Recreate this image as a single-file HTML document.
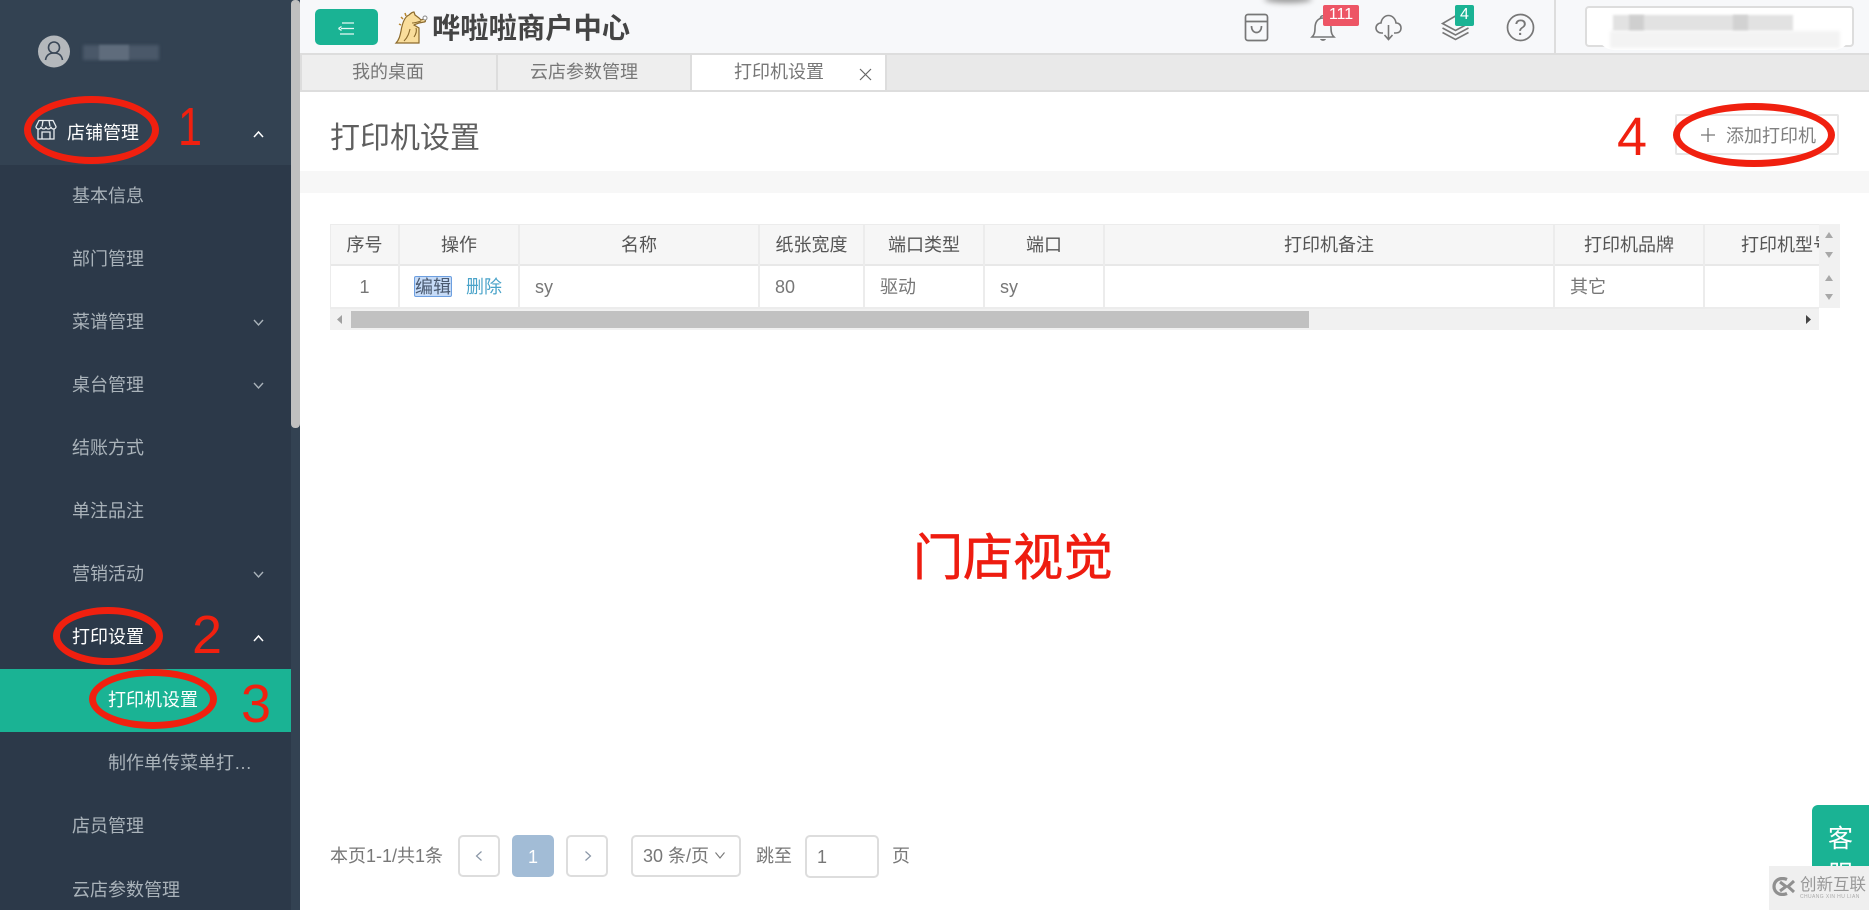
<!DOCTYPE html>
<html lang="zh"><head><meta charset="utf-8"><title>打印机设置</title>
<style>
html,body{margin:0;padding:0;width:1869px;height:910px;overflow:hidden;background:#fff}
body{position:relative;font-family:"Liberation Sans","Noto Sans CJK SC",sans-serif;font-size:18px;color:#666}
div,span,svg{position:absolute;box-sizing:border-box}
.t{white-space:nowrap;line-height:30px;height:30px}
.m{color:#aab3ba;left:72px}
.th{color:#555;text-align:center;top:230px}
.td{color:#777;top:272px}
.sep{top:224px;width:2px;height:84px;background:#ececec}
.r{font-family:"Liberation Sans",sans-serif;color:#f0200f;line-height:1;white-space:nowrap}
.el{border:7px solid #f0200f;border-radius:50%}
.pg{border:2px solid #ddd;border-radius:5px;top:835px;height:42px;background:#fff}
</style></head><body>

<!-- sidebar -->
<div style="left:0;top:0;width:300px;height:910px;background:#334252"></div>
<div style="left:0;top:165px;width:291px;height:745px;background:#2c3949"></div>
<div style="left:291px;top:0;width:9px;height:428px;background:#c0c0c0;border-radius:4px"></div>

<svg style="left:38px;top:35px" width="32" height="33" viewBox="0 0 32 33"><circle cx="16" cy="16.500" r="16" fill="#b4b8bc"/><circle cx="16" cy="12.500" r="5.500" fill="none" stroke="#3a4757" stroke-width="1.600"/><path d="M7.500 25c.8-5 4-7 8.500-7s7.700 2 8.500 7" fill="none" stroke="#3a4757" stroke-width="1.600"/></svg>
<div style="left:83px;top:45px;width:76px;height:15px;background:#4a5869;filter:blur(1.500px)"></div>
<div style="left:99px;top:45px;width:30px;height:15px;background:#5f6c7c;filter:blur(1px)"></div>

<svg style="left:35px;top:119px" width="22" height="21" viewBox="0 0 22 21" fill="none" stroke="#e8ecef" stroke-width="1.300"><path d="M4 1.500h14l3 6c0 1.500-1.200 2.500-2.500 2.500S16 9 16 7.800C16 9 14.500 10 13.300 10S11 9 11 7.800C11 9 10 10 8.700 10S6 9 6 7.800C6 9 5 10 3.500 10S1 9 1 7.500z"/><path d="M3 10v10h16V10M7 20v-7h8v7M7 7.500l1-6M15 7.500l-1-6"/></svg>
<div class="t" style="left:67px;top:118px;color:#fff">店铺管理</div>
<svg style="left:253px;top:130px" width="11" height="9" viewBox="0 0 11 9" fill="none" stroke="#fff" stroke-width="1.500"><path d="M1 7l4.500-5L10 7"/></svg>

<div class="t m" style="top:181px">基本信息</div>
<div class="t m" style="top:244px">部门管理</div>
<div class="t m" style="top:307px">菜谱管理</div>
<svg style="left:253px;top:318px" width="11" height="9" viewBox="0 0 11 9" fill="none" stroke="#aab3ba" stroke-width="1.400"><path d="M1 2l4.500 5L10 2"/></svg>
<div class="t m" style="top:370px">桌台管理</div>
<svg style="left:253px;top:381px" width="11" height="9" viewBox="0 0 11 9" fill="none" stroke="#aab3ba" stroke-width="1.400"><path d="M1 2l4.500 5L10 2"/></svg>
<div class="t m" style="top:433px">结账方式</div>
<div class="t m" style="top:496px">单注品注</div>
<div class="t m" style="top:559px">营销活动</div>
<svg style="left:253px;top:570px" width="11" height="9" viewBox="0 0 11 9" fill="none" stroke="#aab3ba" stroke-width="1.400"><path d="M1 2l4.500 5L10 2"/></svg>
<div class="t m" style="top:622px;color:#fff">打印设置</div>
<svg style="left:253px;top:634px" width="11" height="9" viewBox="0 0 11 9" fill="none" stroke="#fff" stroke-width="1.500"><path d="M1 7l4.500-5L10 7"/></svg>
<div style="left:0;top:669px;width:291px;height:63px;background:#1ab394"></div>
<div class="t" style="left:108px;top:685px;color:#fff">打印机设置</div>
<div class="t m" style="left:108px;top:748px">制作单传菜单打…</div>
<div class="t m" style="top:811px">店员管理</div>
<div class="t m" style="top:875px">云店参数管理</div>

<!-- header -->
<div style="left:300px;top:0;width:1569px;height:53px;background:#f7f8fa"></div>
<div style="left:300px;top:53px;width:1569px;height:2px;background:#ddd"></div>
<div style="left:315px;top:9px;width:63px;height:36px;background:#1ab394;border-radius:5px"></div>
<svg style="left:337px;top:21px" width="21" height="15" viewBox="0 0 21 15" fill="none" stroke="#e8f8f4" stroke-width="1.300"><path d="M5 2h12M4 7.500h13M1.500 7.500l3-2M1.500 7.500l3 2M3 13h14"/></svg>

<svg style="left:394px;top:11px" width="34" height="33" viewBox="0 0 34 33"><path d="M2 32c3-3 4-7 5-12 1-6 3-14 8-16 2-2 4-3 5-3l1 3 4 3 2 2 3-1c2 0 2 3 0 3l-5 1c-2 1-4 1-5 2l5 3v15H2z" fill="#f9dd9b" stroke="#8b6a2c" stroke-width="1.200"/><path d="M18 12c3 0 6-1 9-2M16 18c-1 4-2 8-6 12M22 17c1 3 0 6-2 9" fill="none" stroke="#8b6a2c" stroke-width="1.100"/><path d="M7 14l-2-1M9 8L7 6M12 5l-1-3" stroke="#b8862f" stroke-width="1.500"/><circle cx="31" cy="7" r="2" fill="#fff" stroke="#888"/></svg>
<div style="left:432px;top:9px;line-height:38px;font-size:28.300px;font-weight:bold;color:#444;white-space:nowrap">哗啦啦商户中心</div>

<div style="left:1264px;top:-5px;width:48px;height:8px;background:#999;border-radius:50%;filter:blur(3px)"></div>

<svg style="left:1244px;top:13px" width="25" height="29" viewBox="0 0 25 29" fill="none" stroke="#777" stroke-width="1.700"><rect x="1.500" y="1.500" width="22" height="26" rx="2.500"/><path d="M1.500 8.500h22M7.500 13c0 4 2 6.500 5 6.500s5-2.500 5-6.500"/></svg>
<svg style="left:1310px;top:14px" width="26" height="28" viewBox="0 0 26 28" fill="none" stroke="#777" stroke-width="1.600"><path d="M2 23c2-2 3-4 3-9 0-6 3-10 8-10s8 4 8 10c0 5 1 7 3 9zM10.500 4c0-3 5-3 5 0"/><path d="M10 25c1 2.500 5 2.500 6 0z" fill="#777" stroke="none"/></svg>
<div style="left:1323px;top:5px;width:36px;height:21px;background:#ed5565;border-radius:2px;color:#fff;font-size:16px;line-height:20px;text-align:center">111</div>
<svg style="left:1375px;top:14px" width="27" height="27" viewBox="0 0 27 27" fill="none" stroke="#777" stroke-width="1.600"><path d="M8 19H6.500C3 19 1 16.500 1 14c0-3 2.500-5 5-5 .5-4 3.500-7.500 7.500-7.500S20.500 5 21 9c3 0 5 2 5 5 0 3-2 5-5.500 5H19"/><path d="M13.500 11v14M9.500 21l4 4.500 4-4.500"/></svg>
<svg style="left:1441px;top:14px" width="29" height="27" viewBox="0 0 29 27" fill="none" stroke="#777" stroke-width="1.600"><path d="M14.500 2L1.500 9.500l13 7 13-7zM1.500 14l13 7 13-7M1.500 18.500l13 7 13-7"/></svg>
<div style="left:1455px;top:5px;width:19px;height:21px;background:#1ab394;border-radius:2px;color:#fff;font-size:16px;line-height:20px;text-align:center">4</div>
<svg style="left:1506px;top:13px" width="29" height="29" viewBox="0 0 29 29"><circle cx="14.500" cy="14.500" r="13" fill="none" stroke="#777" stroke-width="1.700"/><text x="14.500" y="22" text-anchor="middle" font-family="Liberation Sans" font-size="22" fill="#777">?</text></svg>

<div style="left:1554px;top:0;width:2px;height:53px;background:#ddd"></div>
<div style="left:1585px;top:6px;width:269px;height:41px;background:#fff;border:2px solid #ddd;border-radius:4px"></div>
<div style="left:1598px;top:8px;width:252px;height:42px;background:#fff;border-radius:16px"></div>
<div style="left:1613px;top:15px;width:180px;height:16px;background:#e2e2e2;filter:blur(1px)"></div>
<div style="left:1629px;top:15px;width:15px;height:16px;background:#cfcfcf;filter:blur(1px)"></div>
<div style="left:1733px;top:15px;width:15px;height:16px;background:#d2d2d2;filter:blur(1px)"></div>
<div style="left:1610px;top:31px;width:230px;height:17px;background:#f3f3f3;filter:blur(1.500px)"></div>

<!-- tabs -->
<div style="left:300px;top:55px;width:1569px;height:37px;background:#e9e9e9;border-bottom:2px solid #ddd"></div>
<div style="left:300px;top:55px;width:2px;height:35px;background:#ddd"></div>
<div style="left:302px;top:55px;width:194px;height:35px;background:#eee"></div>
<div style="left:496px;top:55px;width:2px;height:35px;background:#ddd"></div>
<div style="left:498px;top:55px;width:192px;height:35px;background:#eee"></div>
<div style="left:690px;top:55px;width:2px;height:35px;background:#ddd"></div>
<div style="left:692px;top:55px;width:193px;height:35px;background:#fff"></div>
<div style="left:885px;top:55px;width:2px;height:35px;background:#ddd"></div>
<div class="t" style="left:352px;top:57px;color:#777">我的桌面</div>
<div class="t" style="left:530px;top:57px;color:#777">云店参数管理</div>
<div class="t" style="left:734px;top:57px;color:#777">打印机设置</div>
<svg style="left:859px;top:68px" width="13" height="13" viewBox="0 0 13 13" fill="none" stroke="#666" stroke-width="1.200"><path d="M1 1l11 11M12 1L1 12"/></svg>

<!-- page head -->
<div style="left:330px;top:117px;font-size:30px;line-height:44px;color:#5f5f5f;white-space:nowrap">打印机设置</div>
<div style="left:300px;top:171px;width:1569px;height:22px;background:#f7f7f7"></div>
<div style="left:1675px;top:114px;width:164px;height:41px;border:2px solid #e6e6e6;border-radius:2px;background:#fff"></div>
<svg style="left:1701px;top:128px" width="14" height="14" viewBox="0 0 14 14" stroke="#777" stroke-width="1.300"><path d="M7 0v14M0 7h14"/></svg>
<div class="t" style="left:1726px;top:121px;color:#808080">添加打印机</div>

<!-- table -->
<div style="left:330px;top:224px;width:1489px;height:41px;background:#f6f6f6"></div>
<div style="left:330px;top:264px;width:1489px;height:2px;background:#e8e8e8"></div>
<div style="left:330px;top:307px;width:1489px;height:2px;background:#ececec"></div>
<div style="left:330px;top:224px;width:1489px;height:1px;background:#ececec"></div>
<div style="left:330px;top:224px;width:1px;height:84px;background:#ececec"></div>
<div class="sep" style="left:398px"></div>
<div class="sep" style="left:518px"></div>
<div class="sep" style="left:758px"></div>
<div class="sep" style="left:863px"></div>
<div class="sep" style="left:983px"></div>
<div class="sep" style="left:1103px"></div>
<div class="sep" style="left:1553px"></div>
<div class="sep" style="left:1703px"></div>
<div class="t th" style="left:330px;width:69px">序号</div>
<div class="t th" style="left:399px;width:120px">操作</div>
<div class="t th" style="left:519px;width:240px">名称</div>
<div class="t th" style="left:759px;width:105px">纸张宽度</div>
<div class="t th" style="left:864px;width:120px">端口类型</div>
<div class="t th" style="left:984px;width:120px">端口</div>
<div class="t th" style="left:1104px;width:450px">打印机备注</div>
<div class="t th" style="left:1554px;width:150px">打印机品牌</div>
<div style="left:1704px;top:230px;width:115px;height:30px;overflow:hidden"><span class="t" style="left:37px;top:0;color:#555">打印机型号</span></div>
<div class="t td" style="left:330px;width:69px;text-align:center">1</div>
<div style="left:414px;top:276px;width:38px;height:21px;background:#c6dbf7;border:1px solid #6d9fe0;border-radius:2px"></div>
<div class="t td" style="left:415px;color:#4a5a70">编辑</div>
<div class="t td" style="left:466px;color:#4aa3c9">删除</div>
<div class="t td" style="left:535px">sy</div>
<div class="t td" style="left:775px">80</div>
<div class="t td" style="left:880px">驱动</div>
<div class="t td" style="left:1000px">sy</div>
<div class="t td" style="left:1570px">其它</div>

<!-- scrollbars -->
<div style="left:1819px;top:224px;width:21px;height:84px;background:#f1f1f1"></div>
<svg style="left:1819px;top:224px" width="21" height="83" viewBox="0 0 21 83" fill="#a8a8a8"><path d="M10 8l4 6H6zM6 28h8l-4 6zM10 51l4 6H6zM6 70h8l-4 6z"/></svg>
<div style="left:330px;top:309px;width:1489px;height:21px;background:#f1f1f1"></div>
<div style="left:351px;top:311px;width:958px;height:17px;background:#c1c1c1"></div>
<svg style="left:335px;top:313px" width="10" height="13" viewBox="0 0 10 13" fill="#a0a0a0"><path d="M7 2v9L2 6.500z"/></svg>
<svg style="left:1803px;top:313px" width="10" height="13" viewBox="0 0 10 13" fill="#444"><path d="M3 2v9l5-4.500z"/></svg>

<!-- center caption -->
<div style="left:913px;top:526px;font-family:'Noto Sans CJK SC',sans-serif;font-size:50px;line-height:56px;color:#ee1c10;white-space:nowrap;-webkit-text-stroke:.7px #ee1c10">门店视觉</div>

<!-- pagination -->
<div class="t" style="left:330px;top:841px;color:#777">本页1-1/共1条</div>
<div class="pg" style="left:458px;width:42px"></div>
<svg style="left:475px;top:850px" width="8" height="12" viewBox="0 0 8 12" fill="none" stroke="#8a96a6" stroke-width="1.200"><path d="M6.500 1.500L1.500 6l5 4.500"/></svg>
<div class="pg" style="left:512px;width:42px;background:#a2bcd6;border-color:#a2bcd6;color:#fff;text-align:center;line-height:40px">1</div>
<div class="pg" style="left:566px;width:42px"></div>
<svg style="left:584px;top:850px" width="8" height="12" viewBox="0 0 8 12" fill="none" stroke="#8a96a6" stroke-width="1.200"><path d="M1.500 1.500l5 4.500-5 4.500"/></svg>
<div class="pg" style="left:631px;width:110px"></div>
<div class="t" style="left:643px;top:841px;color:#777">30 条/页</div>
<svg style="left:715px;top:852px" width="10" height="7" viewBox="0 0 10 7" fill="none" stroke="#777" stroke-width="1.100"><path d="M.5.500l4.500 5.500L9.500.500"/></svg>
<div class="t" style="left:756px;top:841px;color:#777">跳至</div>
<div class="pg" style="left:805px;width:74px;height:43px"></div>
<div class="t" style="left:817px;top:842px;color:#777">1</div>
<div class="t" style="left:892px;top:841px;color:#777">页</div>

<!-- float -->
<div style="left:1812px;top:805px;width:57px;height:105px;background:#1ab394;border-radius:6px 0 0 0;overflow:hidden;color:#fff;font-size:25px;line-height:36px;text-align:center;padding-top:16px">客<br>服</div>
<div style="left:1769px;top:866px;width:100px;height:44px;background:#efefef"></div>
<svg style="left:1772px;top:877px" width="25" height="19" viewBox="0 0 25 19" fill="none" stroke="#909090"><path d="M15 2.500C13.500 1.800 12 1.500 10.500 1.500 5.500 1.500 2 5 2 9.500s3.500 8 8.500 8c1.500 0 3-.3 4.500-1" stroke-width="3.200"/><path d="M8 5l6 4.500L8 14M22 4l-6 5.500 6 5.500" stroke-width="3"/></svg>
<div style="left:1800px;top:875px;font-size:16.500px;line-height:20px;color:#979797;white-space:nowrap">创新互联</div>
<div style="left:1800px;top:894px;font-size:5px;line-height:6px;color:#aaa;white-space:nowrap;letter-spacing:.4px">CHUANG XIN HU LIAN</div>

<!-- red annotations -->
<div class="el" style="left:24px;top:96px;width:135px;height:68px"></div>
<div class="r" style="left:175px;top:100px;font-size:54px;transform:scaleX(.8)">1</div>
<div class="el" style="left:53px;top:607px;width:110px;height:58px"></div>
<div class="r" style="left:192px;top:608px;font-size:54px">2</div>
<div class="el" style="left:89px;top:669px;width:128px;height:60px"></div>
<div class="r" style="left:241px;top:677px;font-size:54px">3</div>
<div class="el" style="left:1673px;top:103px;width:162px;height:64px"></div>
<div class="r" style="left:1617px;top:110px;font-size:54px">4</div>

</body></html>
